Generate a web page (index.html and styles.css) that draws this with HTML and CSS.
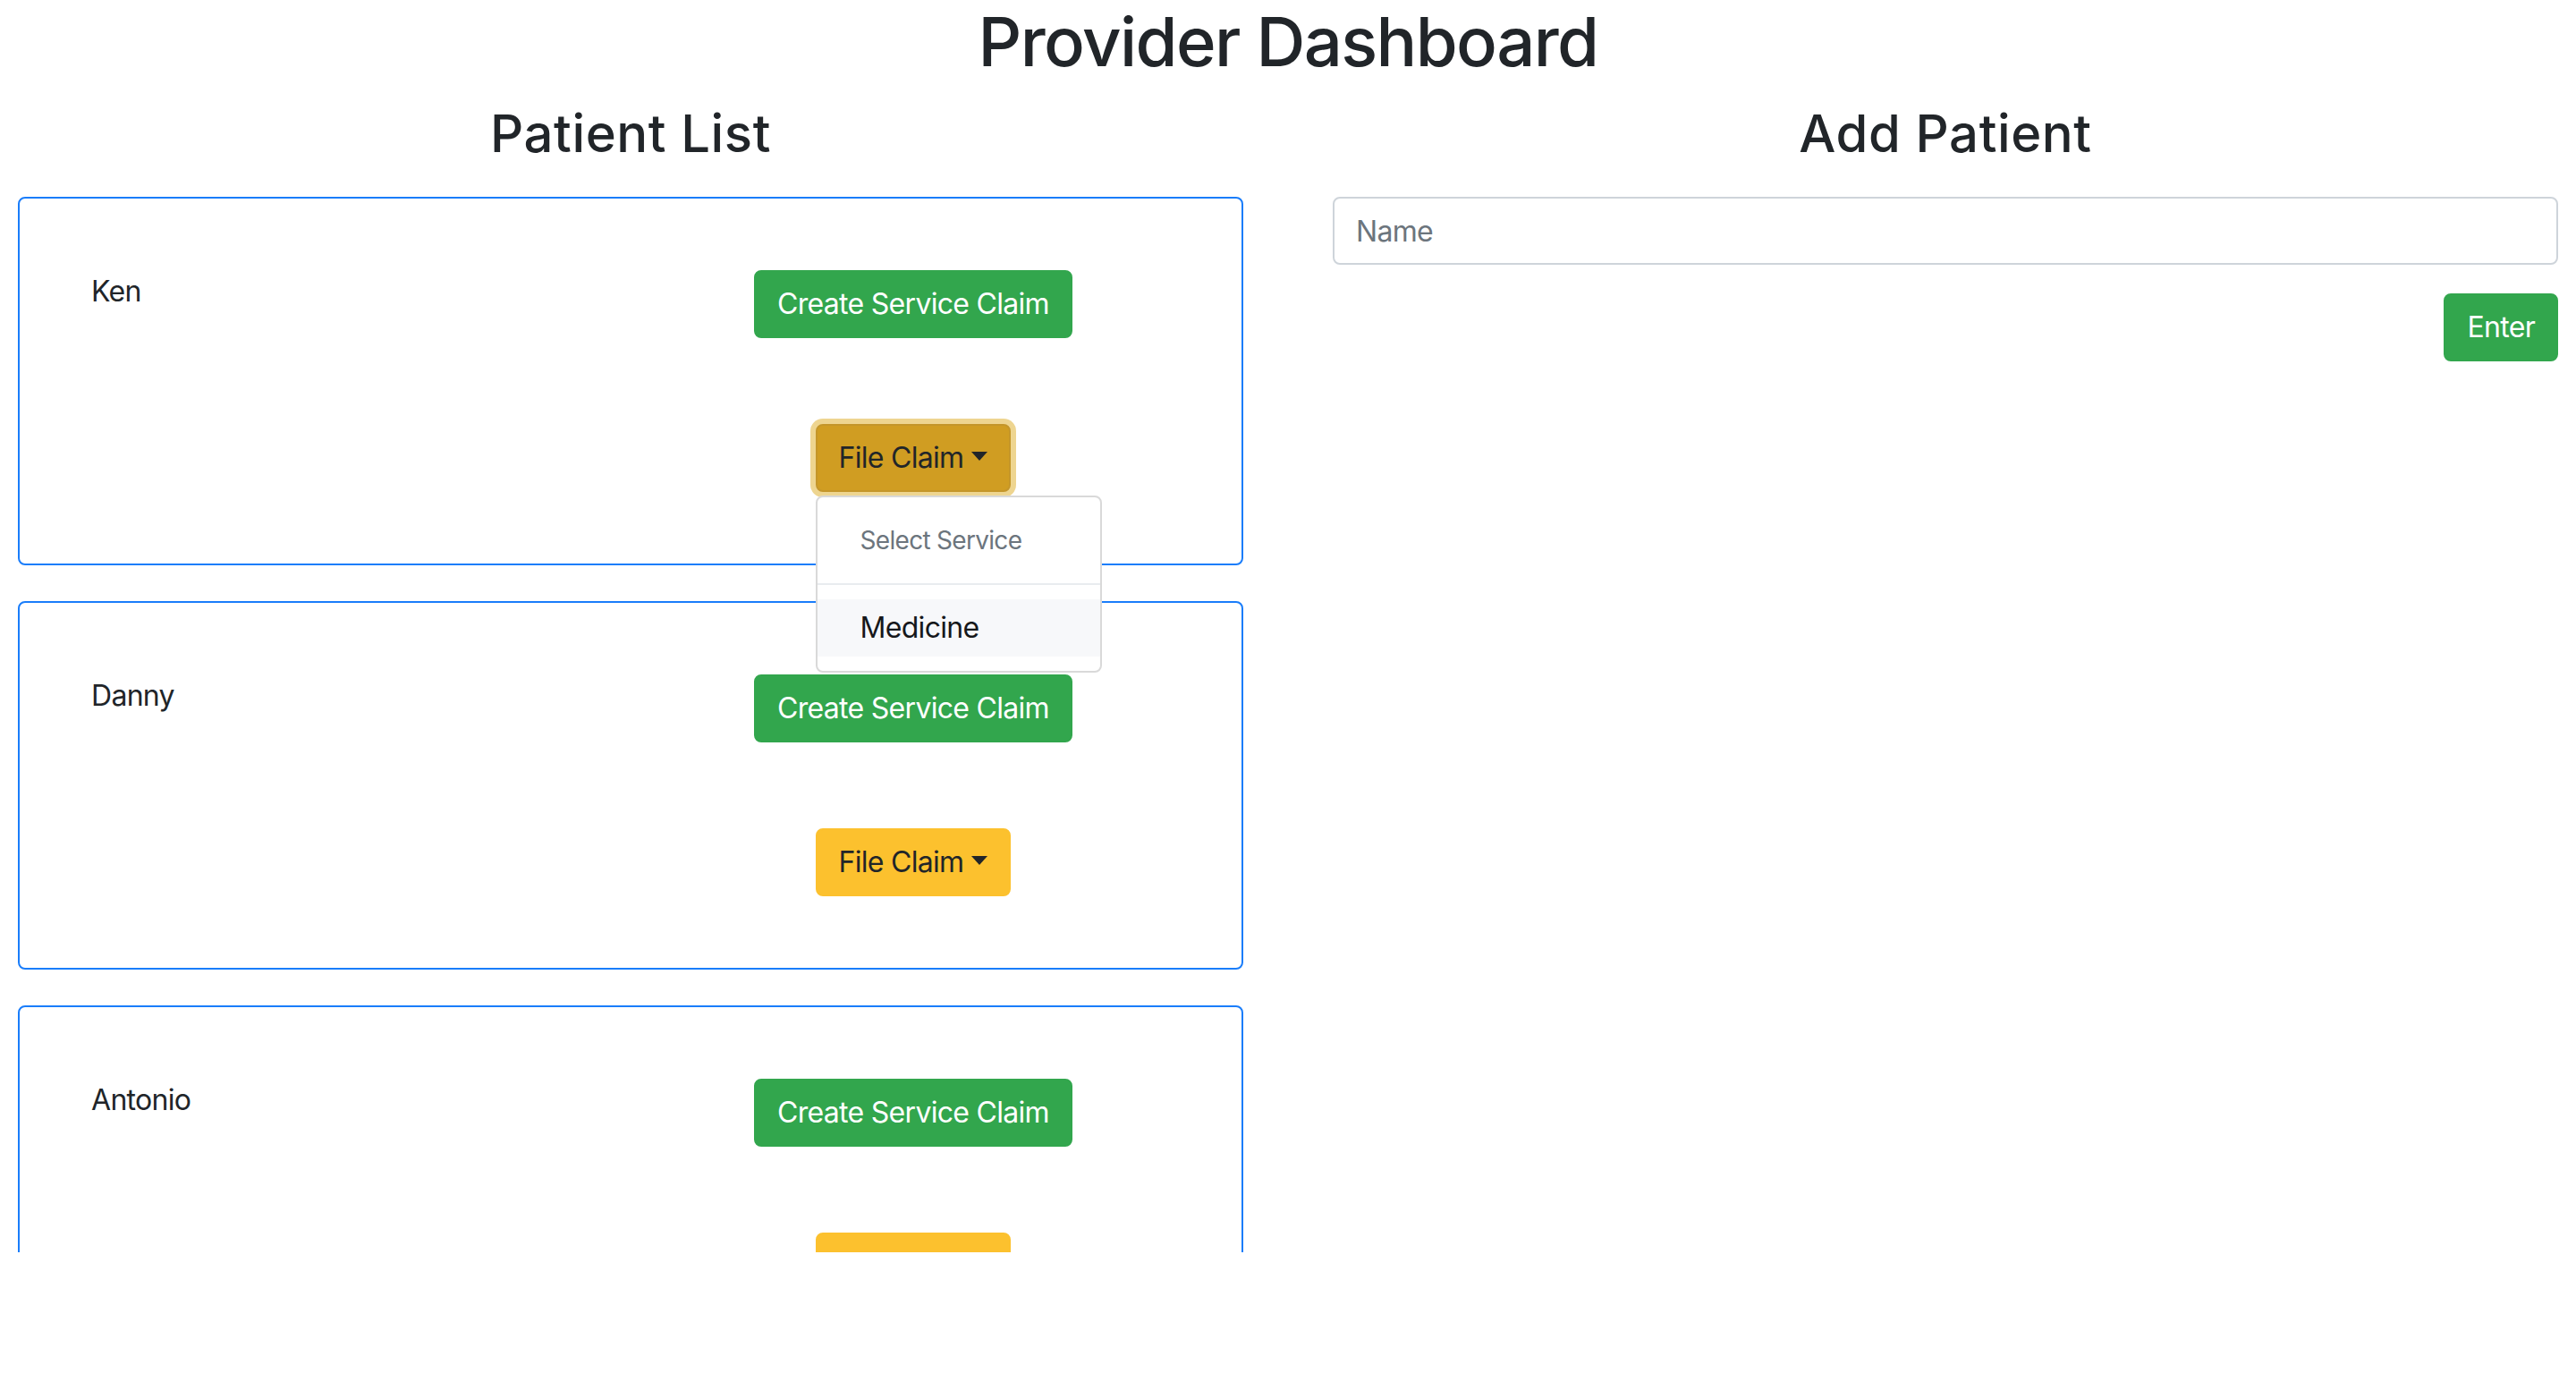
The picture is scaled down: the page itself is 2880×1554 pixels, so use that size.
FILE: index.html
```html
<!DOCTYPE html>
<html lang="en">
<head>
<meta charset="utf-8">
<title>Provider Dashboard</title>
<link rel="stylesheet" href="styles.css">
</head>
<body>
<div class="page">
  <h1 class="title">Provider Dashboard</h1>
  <div class="columns">
    <section class="col">
      <h2 class="col-title">Patient List</h2>
      <div class="patients">
        <div class="card">
          <div class="card-name">Ken</div>
          <div class="card-actions">
            <button class="btn btn-success">Create Service Claim</button>
            <div class="dropdown">
              <button class="btn btn-warning is-open">File Claim<span class="caret"></span></button>
              <div class="menu">
                <div class="menu-header">Select Service</div>
                <div class="menu-divider"></div>
                <div class="menu-item is-active">Medicine</div>
              </div>
            </div>
          </div>
        </div>
        <div class="card">
          <div class="card-name">Danny</div>
          <div class="card-actions">
            <button class="btn btn-success">Create Service Claim</button>
            <div class="dropdown">
              <button class="btn btn-warning">File Claim<span class="caret"></span></button>
            </div>
          </div>
        </div>
        <div class="card">
          <div class="card-name">Antonio</div>
          <div class="card-actions">
            <button class="btn btn-success">Create Service Claim</button>
            <div class="dropdown">
              <button class="btn btn-warning">File Claim<span class="caret"></span></button>
            </div>
          </div>
        </div>
      </div>
    </section>
    <section class="col">
      <h2 class="col-title">Add Patient</h2>
      <form class="add-form">
        <input class="input" type="text" placeholder="Name">
        <div class="form-actions">
          <button type="button" class="btn btn-success">Enter</button>
        </div>
      </form>
    </section>
  </div>
</div>
</body>
</html>
```

FILE: styles.css
```css
* { box-sizing: border-box; }

html, body {
  margin: 0;
  padding: 0;
  background: #fff;
}

body {
  font-family: Inter, "Noto Sans", "Liberation Sans", sans-serif;
  font-size: 32px;
  line-height: 48px;
  letter-spacing: -0.7px;
  color: #212529;
}

.page {
  height: 1400px;
  overflow: hidden;
}

.title {
  margin: 0;
  text-align: center;
  font-size: 76px;
  line-height: 92px;
  font-weight: 500;
  letter-spacing: -1.6px;
  color: #212529;
}

.columns {
  display: grid;
  grid-template-columns: 1370px 1370px;
  column-gap: 100px;
  padding: 0 20px;
}

.col-title {
  margin: 22px 0 36px;
  text-align: center;
  font-size: 58px;
  line-height: 70px;
  font-weight: 500;
  letter-spacing: 0.6px;
}

.patients {
  display: flex;
  flex-direction: column;
  gap: 40px;
}

.card {
  display: grid;
  grid-template-columns: 632px 1fr;
  border: 2px solid #1a7dfa;
  border-radius: 8px;
  padding: 80px 40px;
}

.card-name {
  padding-left: 40px;
}

.card-actions {
  display: flex;
  flex-direction: column;
  align-items: center;
  gap: 96px;
}

.btn {
  font-family: inherit;
  font-size: 32px;
  line-height: 48px;
  letter-spacing: -0.7px;
  padding: 12px 24px;
  border: 2px solid transparent;
  border-radius: 8px;
  cursor: pointer;
  display: inline-block;
  white-space: nowrap;
}

.btn-success {
  background: #32a64d;
  border-color: #32a64d;
  color: #fff;
}

.btn-warning {
  background: #fcc12e;
  border-color: #fcc12e;
  color: #212529;
}

.btn-warning.is-open {
  background: #d09d22;
  border-color: #c4962a;
  box-shadow: 0 0 0 6px #eed590;
}

.caret {
  display: inline-block;
  margin-left: 9px;
  vertical-align: 8px;
  border-top: 10px solid #212529;
  border-left: 9px solid transparent;
  border-right: 9px solid transparent;
}

.dropdown {
  position: relative;
}

.menu {
  position: absolute;
  top: calc(100% + 4px);
  left: 0;
  z-index: 10;
  width: 320px;
  padding: 16px 0;
  background: #fff;
  border: 2px solid #d9d9d9;
  border-radius: 8px;
}

.menu-header {
  padding: 11px 48px;
  font-size: 28px;
  line-height: 42px;
  color: #6c757d;
}

.menu-divider {
  margin: 16px 0;
  border-top: 2px solid #e9ecef;
}

.menu-item {
  padding: 8px 48px;
  color: #16181b;
}

.menu-item.is-active {
  background: #f7f8fa;
}

.add-form {
  display: flex;
  flex-direction: column;
}

.input {
  width: 100%;
  height: 76px;
  padding: 12px 24px;
  font-family: inherit;
  font-size: 32px;
  letter-spacing: -0.7px;
  color: #495057;
  border: 2px solid #ced4da;
  border-radius: 8px;
  outline: none;
}

.input::placeholder {
  color: #6c757d;
}

.form-actions {
  display: flex;
  justify-content: flex-end;
  margin-top: 32px;
}
```
